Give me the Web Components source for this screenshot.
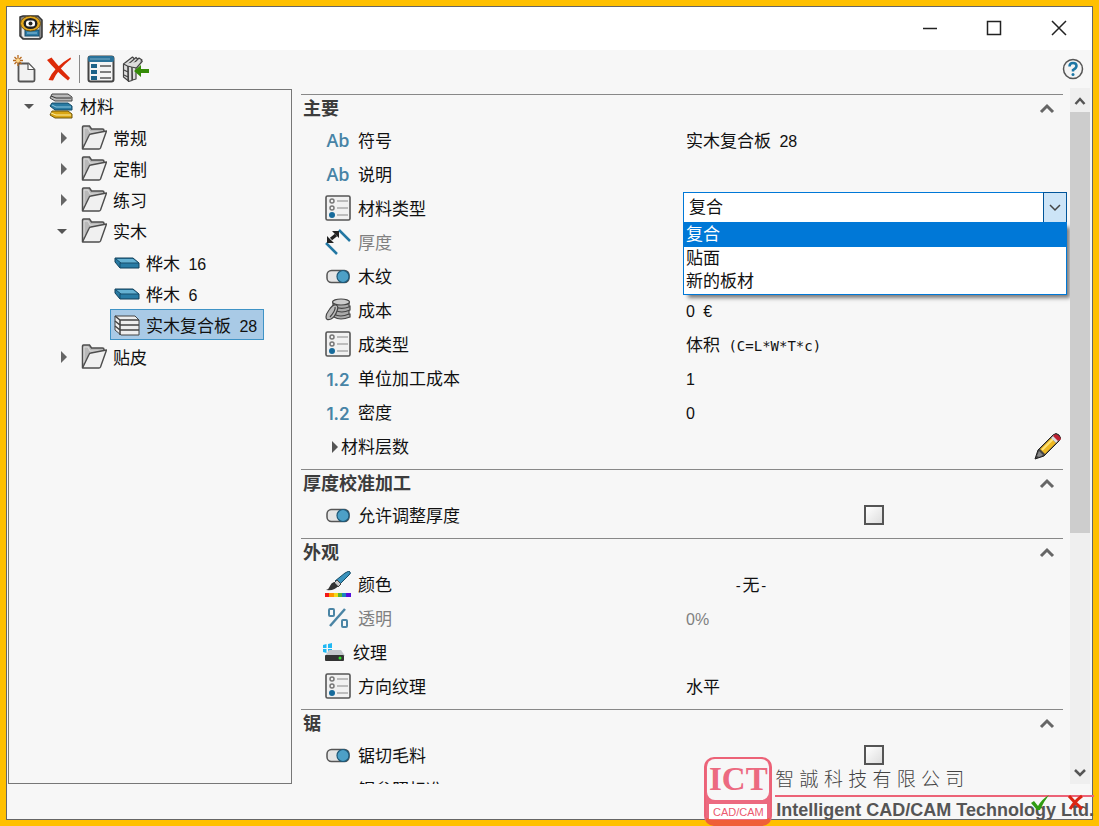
<!DOCTYPE html>
<html lang="zh-CN">
<head>
<meta charset="utf-8">
<title>材料库</title>
<style>
  html { height: 100%; }
  body {
    box-sizing: border-box; margin: 0; padding: 6px; height: 100%; min-height: 480px;
    display: flex; position: relative; overflow: hidden; background: #ffc000;
    color: #111; font: 17px/24px "Noto Sans CJK SC", sans-serif;
  }
</style>
</head>
<body>
<material-window>
  <title-bar slot="title" caption="材料库"></title-bar>
  <tool-bar slot="tools"></tool-bar>

  <tree-panel slot="tree">
    <tree-node icon="stack" arrow="down"><span slot="label">材料</span>
      <tree-node icon="folder" arrow="right"><span slot="label">常规</span></tree-node>
      <tree-node icon="folder" arrow="right"><span slot="label">定制</span></tree-node>
      <tree-node icon="folder" arrow="right"><span slot="label">练习</span></tree-node>
      <tree-node icon="folder" arrow="down"><span slot="label">实木</span>
        <tree-node icon="board"><mixed-text slot="label">桦木 16</mixed-text></tree-node>
        <tree-node icon="board"><mixed-text slot="label">桦木 6</mixed-text></tree-node>
        <tree-node icon="layers" selected><mixed-text slot="label">实木复合板 28</mixed-text></tree-node>
      </tree-node>
      <tree-node icon="folder" arrow="right"><span slot="label">贴皮</span></tree-node>
    </tree-node>
  </tree-panel>

  <prop-section heading="主要">
    <prop-row icon="ab" label="符号"><mixed-text>实木复合板 28</mixed-text></prop-row>
    <prop-row icon="ab" label="说明"></prop-row>
    <prop-row icon="list" label="材料类型" type="combo" options="复合,贴面,新的板材"></prop-row>
    <prop-row icon="size" label="厚度" disabled></prop-row>
    <prop-row icon="toggle" label="木纹"></prop-row>
    <prop-row icon="coins" label="成本"><mixed-text>0 €</mixed-text></prop-row>
    <prop-row icon="list" label="成类型"><mixed-text>体积 (C=L*W*T*c)</mixed-text></prop-row>
    <prop-row icon="num" label="单位加工成本"><mixed-text>1</mixed-text></prop-row>
    <prop-row icon="num" label="密度"><mixed-text>0</mixed-text></prop-row>
    <prop-row icon="right" label="材料层数" type="edit"></prop-row>
  </prop-section>
  <prop-section heading="厚度校准加工">
    <prop-row icon="toggle" label="允许调整厚度" type="check"></prop-row>
  </prop-section>
  <prop-section heading="外观">
    <prop-row icon="brush" label="颜色" inset><mixed-text>-无-</mixed-text></prop-row>
    <prop-row icon="percent" label="透明" disabled><mixed-text>0%</mixed-text></prop-row>
    <prop-row icon="drive" label="纹理"></prop-row>
    <prop-row icon="list" label="方向纹理">水平</prop-row>
  </prop-section>
  <prop-section heading="锯">
    <prop-row icon="toggle" label="锯切毛料" type="check"></prop-row>
    <prop-row icon="num" label="锯参照标准"></prop-row>
  </prop-section>

  <dialog-actions slot="footer"></dialog-actions>
</material-window>
<company-mark></company-mark>

<script>
const ICONS = {
  app: [26, 26, `<path d="M2 2l3-1h15l4 4v17l-2 2H5l-3-3z" fill="#888" stroke="#333" stroke-width="1.500"/><path d="M4 5v16l2 2h15V6z" fill="#e8e8e8"/><rect x="7" y="15" width="14" height="6" fill="#2b7ba6" stroke="#174b69"/><path d="M9 18h10" stroke="#8fc4dd"/><ellipse cx="12.500" cy="8.500" rx="10" ry="7.500" fill="#e4a91f" stroke="#6d5011"/><ellipse cx="12.500" cy="8.500" rx="7" ry="5.500" fill="#222"/><rect x="8" y="5.500" width="9" height="6" rx="2.500" fill="#fff"/><circle cx="12.500" cy="8.500" r="2" fill="#222"/>`],
  newdoc: [24, 28, `<path d="M5.500 8.500h10l6 6V25q0 1.500-1.500 1.500H7q-1.500 0-1.500-1.500z" fill="#f2f2f2" stroke="#555" stroke-width="1.800"/><path d="M15 8.500V14.500h6" fill="#fff" stroke="#555" stroke-width="1.200"/><path d="M5 0v11M0 5.500h10M1.500 2l7 7M8.500 2l-7 7" stroke="#b8691b" stroke-width="1.300"/><circle cx="5" cy="5.500" r="2" fill="#ffd98a"/>`],
  remove: [26, 26, `<path d="M1 4L5.500 1.500Q12 10 24 22l-2 2.500Q10 15 1 4z" fill="#dd2a08"/><path d="M24.500 1.500L25 3Q12 13 7 24.500L2.500 24Q8 11 24.500 1.500z" fill="#dd2a08"/>`],
  details: [28, 28, `<rect x="1.500" y="1.500" width="25" height="25" rx="2" fill="#f4f4f4" stroke="#444" stroke-width="2"/><rect x="1" y="1" width="26" height="6" rx="2" fill="#2a7299"/><path d="M3 4h20" stroke="#78adc8"/><g fill="#1c6288"><rect x="4" y="9" width="6" height="4"/><rect x="4" y="15" width="6" height="4"/><rect x="4" y="21" width="6" height="4"/></g><path d="M13 11h11M13 17h11M13 23h11" stroke="#555" stroke-width="1.500"/>`],
  importer: [28, 28, `<g fill="#ddd" stroke="#444" stroke-width="1.200" stroke-linejoin="round"><path d="M1.500 9l9-7 2 2v16l-6 6-5-4z"/><path d="M6 9.500l8-7 2 2-6 7v14l-3.500 1z"/><path d="M10 10l7-7 3 2-6 7v12l-3.500 1z"/><path d="M1.500 9l4 2 4 1 5 1 6-7"/><path d="M6 11v15M2 15l4 2M2 20l4 2"/></g><path d="M12 16l7-6v4h8v4h-8v4z" fill="#358b08"/>`],
  help: [22, 22, `<circle cx="11" cy="11" r="9.500" fill="#f4f4f4" stroke="#555" stroke-width="1.500"/><path d="M7.500 8.500Q7.500 5 11 5t3.500 3Q14.500 10 11 12v1.500" fill="none" stroke="#1c76a5" stroke-width="2.500"/><circle cx="11" cy="16.500" r="1.500" fill="#1c76a5"/>`],
  stack: [26, 26, `<g stroke-linejoin="round"><path d="M2 5l2-4h16l4 3v4H7z" fill="#b9b9b9" stroke="#444"/><path d="M3 3l5 2h15" fill="none" stroke="#333"/><path d="M2 13l2-3h16l4 3v4H7z" fill="#297ba3" stroke="#144a66"/><path d="M4 12l4 2h15" fill="none" stroke="#8cc7df"/><path d="M2 22l2-4h16l4 3v4H7z" fill="#d9a514" stroke="#6f560e"/><path d="M3 20l5 2h15" fill="none" stroke="#fff0a0"/></g>`],
  folder: [26, 26, `<path d="M1.500 23V2q0-1 1-1h6l2 3h11q1.500 0 1.500 1.500V8" fill="#b8b8b8" stroke="#4d4d4d" stroke-width="1.500"/><path d="M3 19V3h4l2 4h11v2" fill="none" stroke="#ddd"/><path d="M1.500 24L8 10.500q.5-1.500 2-1.500l15.500-3-6 17q-.5 1-1.500 1H2q-1 0-.5-.5z" fill="#f0f0f0" stroke="#4d4d4d" stroke-width="1.400" stroke-linejoin="round"/>`],
  board: [26, 26, `<path d="M1 8h18l6 5v5H6l-5-6z" fill="#287ba4" stroke="#103f59" stroke-linejoin="round"/><path d="M2 9h17l5 4H7z" fill="#65b1d2"/><path d="M6 18v-5h19M2 9l5 4" fill="none" stroke="#174f6d"/>`],
  layers: [26, 26, `<path d="M1 4h20l4 4v15H7l-6-5z" fill="#eee" stroke="#444" stroke-linejoin="round"/><path d="M1 4l5 4h19M1 9l5 4h19M1 14l5 4h19M6 8v15" fill="none" stroke="#444" stroke-width="1.500"/>`],
  list: [26, 26, `<rect x="1" y="1" width="24" height="24" rx="1.500" fill="#f1f1f1" stroke="#555" stroke-width="1.600"/><g fill="none" stroke="#777" stroke-width="1.500"><circle cx="7" cy="6" r="2"/><circle cx="7" cy="13" r="2"/></g><circle cx="7" cy="20" r="3" fill="#176b9c"/><path d="M12 6h11M12 13h11M12 20h11" stroke="#aaa" stroke-width="1.500"/>`],
  size: [26, 26, `<path d="M14 1l11 11M1 14l11 11" stroke="#2377a3" stroke-width="2.500"/><path d="M6 10l5-4" stroke="#222" stroke-width="3.500"/><path d="M7 2h7v7zM2 7v7h7z" fill="#222"/>`],
  toggle: [26, 26, `<rect x="2" y="7.500" width="22" height="12" rx="4.500" fill="#e5e5e5" stroke="#555" stroke-width="1.500"/><circle cx="18" cy="13.500" r="6" fill="#4da0c7" stroke="#1d5878" stroke-width="1.200"/>`],
  coins: [26, 26, `<g fill="#aaa" stroke="#444" stroke-width="1.200"><path d="M9 17v3q6 4 16 0v-3z"/><path d="M9 13v4q6 4 15 0v-4z"/><path d="M10 9v4q6 4 15 0V9z"/><path d="M8 5v4q7 4 16 1V5z"/><ellipse cx="16" cy="5" rx="8.500" ry="3" fill="#ccc"/><path d="M4 13q4-6 7-5t1 6q-2 6-6 8-5 2-5-2 0-3 3-7z" fill="#bbb"/><path d="M10 10q1 3-5 10" fill="none"/></g>`],
  brush: [26, 26, `<path d="M24 0q3 2 0 4L14 14l-4-4L20 2z" fill="#3a93bd" stroke="#174b65"/><path d="M12 9l4 4-3 3-4-4z" fill="#c9c9c9" stroke="#444"/><path d="M9 11l4 4q-3 5-12 4 3-1 4-4t4-4z" fill="#333"/><path d="M0 22h4v4H0z" fill="#f21818"/><path d="M4 22h5v4H4z" fill="#ff9500"/><path d="M9 22h4v4H9z" fill="#f3da19"/><path d="M13 22h4v4h-4z" fill="#55b635"/><path d="M17 22h4v4h-4z" fill="#1984bd"/><path d="M21 22h5v4h-5z" fill="#5510dd"/>`],
  percent: [26, 26, `<g fill="none" stroke="#4b85a5" stroke-width="2"><rect x="4" y="4" width="5" height="7" rx="1"/><rect x="17" y="15" width="5" height="7" rx="1"/><path d="M20 4L5 21" stroke-width="2.500"/></g>`],
  drive: [26, 26, `<g fill="#20b8f3"><path d="M0 6l3.500-1v4H0zM5 5l4-1v5H5zM0 10h3.500v4L0 13zM5 10h4v4H5z"/></g><path d="M6 11h12l4 6H2z" fill="#c5c8cc"/><rect x="2" y="16" width="19" height="6" rx="1" fill="#333"/><circle cx="17" cy="19" r="1.500" fill="#32e22c"/>`],
  right: [18, 18, `<path d="M9 4l6 6-6 6z" fill="#555"/>`],
  pencil: [28, 28, `<path d="M1 27l3-9L19 3q3-3 6 0t0 6L10 24z" fill="#444" stroke="#222" stroke-linejoin="round"/><path d="M6 17L17 6l5 5-11 11z" fill="#eeb822"/><path d="M8 18L19 7" stroke="#ffe477" stroke-width="2"/><path d="M17 6l3-3 5 5-3 3z" fill="#ddd"/><path d="M20 3q2-2 5 1t1 4l-2 1-5-5z" fill="#bd2031"/><path d="M5 19l4 4-4 2-2-1z" fill="#888"/>`],
  up: [16, 16, `<path d="M2 11l6-6 6 6" fill="none" stroke="#666" stroke-width="3"/>`],
  scrollup: [12, 12, `<path d="M1.500 10l4.500-5 4.500 5" fill="none" stroke="#555" stroke-width="2.500"/>`],
  scrolldown: [12, 12, `<path d="M1 4l5 5 5-5" fill="none" stroke="#555" stroke-width="2.500"/>`],
  chevron: [14, 14, `<path d="M2 5l5 5 5-5" fill="none" stroke="#444" stroke-width="1.500"/>`],
  minimize: [16, 16, `<path d="M1 8.500h14" stroke="#222" stroke-width="1.500"/>`],
  maximize: [16, 16, `<rect x="1.500" y="1.500" width="13" height="13" fill="none" stroke="#222" stroke-width="1.500"/>`],
  close: [16, 16, `<path d="M1 1l14 14M15 1L1 15" stroke="#222" stroke-width="1.500"/>`],
  accept: [20, 18, `<path d="M1 9l3-2 4 5Q12 5 19 1q-5 6-9 15H7z" fill="#2f9b12"/>`],
  cancel: [18, 18, `<path d="M2 2q5 6 13 13M15 2Q8 7 3 15" fill="none" stroke="#dc2412" stroke-width="3"/>`]
};
const svg = name => {
  const [w, h, body] = ICONS[name];
  return `<svg width="${w}" height="${h}" viewBox="0 0 ${w} ${h}" aria-hidden="true">${body}</svg>`;
};
const BASE = `:host,*{box-sizing:border-box} svg{display:block;flex:none}
button{display:grid;place-items:center;padding:0;border:0;background:none;color:inherit;font:inherit}`;

function define(tag, render) {
  customElements.define(tag, class extends HTMLElement {
    connectedCallback() {
      if (this.shadowRoot) return;
      const t = document.createElement('template');
      t.innerHTML = render(this);
      this.attachShadow({ mode: 'open' }).append(t.content.cloneNode(true));
    }
  });
}

/* Sets half-width runs beside full-width characters. */
define('mixed-text', el => {
  const html = el.textContent.replace(/[\x20-\x7e€]+/g, run =>
    /[A-Z(-]/.test(run) ? `<span class="mono">${run}</span>`
      : run.replace(/ |[\d€%]+/g, part => `<span class="${part === ' ' ? 'mono' : 'num'}">${part}</span>`));
  return `<style>:host{display:inline;white-space:pre}
    .mono{font:14px/1 "DejaVu Sans Mono",monospace}
    .num{font:16px/1 "Liberation Sans",sans-serif}</style>${html}`;
});

define('material-window', () => `<style>${BASE}
  :host{flex:1;min-width:0;display:flex;flex-direction:column;border:1px solid #666;background:#f7f7f7}
  main{flex:1;min-height:0;display:grid;grid-template-columns:284px minmax(0,1fr) 20px;padding:0 2px 0 1px}
  .props{min-height:0;overflow:hidden;padding:6px 7px 0 9px}
  </style>
  <slot name="title"></slot><slot name="tools"></slot>
  <main><slot name="tree"></slot><div class="props"><slot></slot></div><scroll-rail></scroll-rail></main>
  <slot name="footer"></slot>`);

define('title-bar', el => `<style>${BASE}
  :host{display:flex;align-items:center;gap:5px;height:43px;padding:0 0 2px 11px;background:#fff}
  h1{flex:1;margin:0;font-size:17px;font-weight:400}
  button{width:64px;height:41px}
  button:last-child{width:66px}
  nav{display:flex}
  </style>${svg('app')}<h1>${el.getAttribute('caption')}</h1>
  <nav><button aria-label="最小化">${svg('minimize')}</button><button aria-label="最大化">${svg('maximize')}</button><button aria-label="关闭">${svg('close')}</button></nav>`);

define('tool-bar', () => `<style>${BASE}
  :host{display:flex;align-items:center;gap:7px;height:38px;padding:0 8px 0 6px}
  button{height:28px}
  button:nth-of-type(2){margin-left:2px}
  .rule{width:1px;height:28px;background:#888}
  .help{margin-left:auto}
  </style><button aria-label="新建">${svg('newdoc')}</button><button aria-label="删除">${svg('remove')}</button>
  <span class="rule"></span><button aria-label="详细信息">${svg('details')}</button><button aria-label="导入">${svg('importer')}</button>
  <button class="help" aria-label="帮助">${svg('help')}</button>`);

define('tree-panel', () => `<style>
  :host{display:block;box-sizing:border-box;margin-top:1px;padding:0 0 0 10px;border:1px solid #777;overflow:hidden}
  </style><div role="tree"><slot></slot></div>`);

define('tree-node', el => {
  const arrow = { down: '<path d="M5 8h10l-5 5z" fill="#555"/>', right: '<path d="M9 4l6 6-6 6z" fill="#666"/>' }[el.getAttribute('arrow')] || '';
  return `<style>${BASE}
  :host{display:block;white-space:nowrap}
  .row{display:flex;align-items:center;gap:5px;height:31px}
  .item{display:flex;align-items:center;gap:6px;height:31px;padding:0 6px 0 3px;border:1px solid transparent}
  :host([selected]) .item{background:#a9cae6;border-color:#3f93c6}
  .kids{padding:1px 0 1px 33px}
  :host(:not([arrow="down"])) .kids{display:none}
  </style><div class="row" role="treeitem"><svg width="20" height="20">${arrow}</svg>
  <div class="item">${svg(el.getAttribute('icon'))}<slot name="label"></slot></div></div>
  <div class="kids" role="group"><slot></slot></div>`;
});

define('prop-section', el => `<style>${BASE}
  :host{display:block;padding-bottom:6px;border-top:1px solid #888}
  header{display:flex;align-items:center;justify-content:space-between;height:28px;padding:0 8px 0 2px}
  h2{margin:0;font-size:18px;line-height:24px;padding-bottom:4px;font-weight:700;color:#3c3c3c}
  </style><header><h2>${el.getAttribute('heading')}</h2><button aria-label="折叠">${svg('up')}</button></header><slot></slot>`);

define('prop-row', el => {
  const a = n => el.getAttribute(n), type = a('type'), icon = a('icon');
  const glyph = icon === 'ab' ? '<b class="ab">Ab</b>' : icon === 'num' ? '<b class="dec">1.2</b>' : svg(icon);
  const opts = (a('options') || '').split(',');
  const value = type === 'check' ? '<input id="v" type="checkbox">'
    : type === 'edit' ? `<button id="v" aria-label="编辑">${svg('pencil')}</button>`
    : type === 'combo' ? `<div class="combo"><select id="v">${opts.map(o => `<option>${o}</option>`).join('')}</select>
        <span class="drop">${svg('chevron')}</span>
        <ul role="listbox">${opts.map((o, i) => `<li role="option" aria-selected="${i === 0}">${o}</li>`).join('')}</ul></div>`
    : '<slot></slot>';
  const tag = type ? 'label for="v"' : 'span';
  return `<style>${BASE}
  :host{display:grid;grid-template-columns:1fr 1fr;align-items:center;height:34px;white-space:nowrap}
  :host([disabled]){color:#808080}
  .name{display:flex;align-items:center;gap:7px;padding-left:24px}
  .name,.value{padding-bottom:1px}
  :host([icon="drive"]) .name{gap:4px;padding-left:22px}
  :host([icon="right"]) .name{gap:0;padding-left:22px}
  .value{display:flex;align-items:center;padding-left:4px;min-width:0}
  :host([inset]) .value{padding-left:52px}
  :host([type="check"]) .value{justify-content:center;padding-left:2px}
  :host([type="edit"]) .value{justify-content:flex-end;padding-right:1px}
  :host([type="combo"]) .value{padding:0 0 2px 1px;margin-right:-4px}
  b{width:26px;color:#4784a6;font-weight:600;text-align:center}
  .ab{font-family:"Open Sans",sans-serif;font-size:18px}
  .dec{padding-top:4px;font-family:Inter,sans-serif;font-size:17px}
  input{appearance:none;width:20px;height:20px;margin:0;border:2px solid #555;background:linear-gradient(135deg,#fff,#ddd)}
  .combo{position:relative;flex:1;height:31px;color:#111}
  select{appearance:none;width:100%;height:31px;margin:0;padding:0 30px 3px 5px;border:1px solid #0078d7;border-radius:0;background:#fff;color:inherit;font:inherit}
  .drop{position:absolute;top:0;right:0;width:24px;height:31px;display:grid;place-items:center;border:1px solid #005499;background:#cce4f7;pointer-events:none}
  ul{position:absolute;z-index:2;top:30px;left:0;right:0;margin:0;padding:0 0 1px;list-style:none;border:1px solid #0078d7;background:#fff;box-shadow:4px 4px 4px -1px rgba(0,0,0,.5)}
  li{height:23px;padding-left:2px;line-height:20px}
  li[aria-selected="true"]{height:24px;background:#0078d7;color:#fff}
  </style><${tag} class="name">${glyph}<span>${a('label')}</span></${tag.split(' ')[0]}><div class="value">${value}</div>`;
});

define('scroll-rail', () => `<style>${BASE}
  :host{display:flex;flex-direction:column;background:#efefef}
  button{height:24px}
  .track{flex:1}
  .thumb{height:65%;background:#cdcdcd}
  </style><button aria-label="向上滚动">${svg('scrollup')}</button><div class="track"><div class="thumb"></div></div><button aria-label="向下滚动">${svg('scrolldown')}</button>`);

define('dialog-actions', () => `<style>${BASE}
  :host{position:relative;z-index:4;display:flex;align-items:center;justify-content:flex-end;gap:17px;height:35px;padding:2px 7px 0 0}
  </style><button aria-label="确定">${svg('accept')}</button><button aria-label="取消">${svg('cancel')}</button>`);

define('company-mark', () => `<style>*{box-sizing:border-box}
  :host{position:absolute;z-index:3;right:5px;bottom:0;display:flex;gap:3px;pointer-events:none;white-space:nowrap}
  .logo{width:68px;height:69px;padding:0 3px;border:2px solid #ec6277;border-bottom:6px solid #ef5f38;border-radius:10px;background:#ec6a80;text-align:center}
  .top{height:41px;margin:0 -2px;border-radius:8px;background:#f7f7f7;color:#ec6a80;font:700 33px/41px "Liberation Serif",serif}
  .sub{height:15px;margin-top:4px;background:#fff;color:#ec5a70;font:11px/16px "Liberation Sans",sans-serif}
  .zh{height:38px;color:#444;font:300 19px/46px "Liberation Sans","Noto Sans CJK TC",sans-serif}
  .en{padding:2px 0 0 1px;border-top:2px solid #ec6277;color:#555;font:700 18px/22px "Liberation Sans",sans-serif}
  </style><div class="logo"><div class="top">ICT</div><div class="sub">CAD/CAM</div></div>
  <div class="words"><div class="zh">智 誠 科 技 有 限 公 司</div><div class="en">Intelligent CAD/CAM Technology Ltd.</div></div>`);
</script>
</body>
</html>
